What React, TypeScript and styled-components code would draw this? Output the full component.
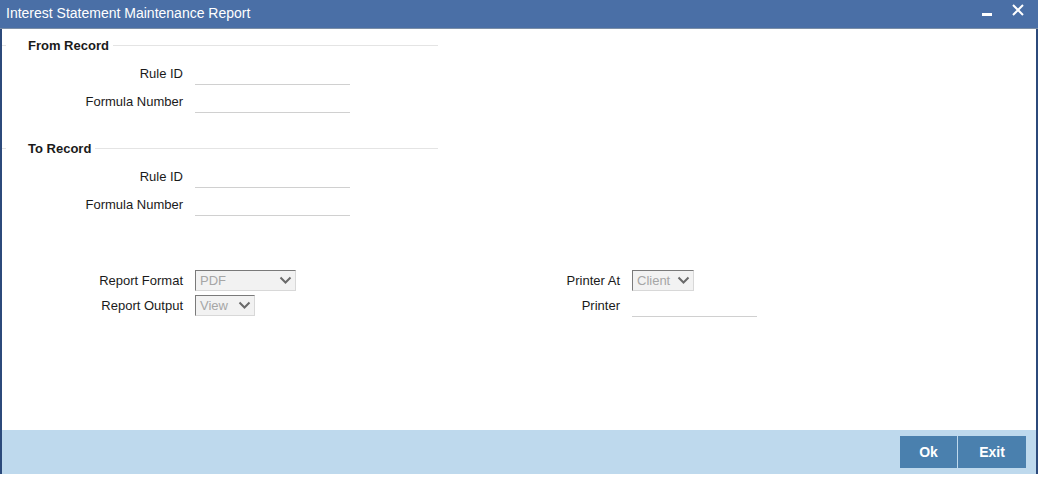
import React from "react";
import styled, { createGlobalStyle } from "styled-components";

const Global = createGlobalStyle`
  html, body { margin: 0; padding: 0; background: #ffffff; }
  body { font-family: Arial, "Liberation Sans", sans-serif; }
  * { box-sizing: border-box; }
`;

const Page = styled.div`
  width: 1038px;
  height: 483px;
  background: #ffffff;
  overflow: hidden;
`;

const Window = styled.div`
  width: 1038px;
  height: 474px;
  display: flex;
  flex-direction: column;
`;

const TitleBar = styled.div`
  height: 29px;
  flex: none;
  background: #4a6fa6;
  border-bottom: 1px solid #7b8ea6;
  display: flex;
  align-items: center;
  padding: 0 0 2px 6px;
  color: #ffffff;
  font-family: Arial, "Liberation Sans", sans-serif;
  font-size: 14px;
`;

const Title = styled.div`
  flex: 1;
`;

const WinButtons = styled.div`
  display: flex;
  align-items: center;
  gap: 20px;
  padding-right: 14px;
  margin-top: -6px;
`;

const Body = styled.div`
  flex: 1;
  display: flex;
  flex-direction: column;
  border-left: 2px solid #2c4a7b;
  border-right: 2px solid #2c4a7b;
`;

const Content = styled.div`
  flex: 1;
  display: flex;
  flex-direction: column;
  padding-top: 6px;
`;

const SectionHeader = styled.div<{ $top: number }>`
  width: 436px;
  height: 20px;
  margin-top: ${(p) => p.$top}px;
  margin-bottom: 4px;
  display: flex;
  align-items: center;
  &::before {
    content: "";
    width: 4px;
    height: 1px;
    background: #e4e4e4;
  }
  &::after {
    content: "";
    flex: 1;
    height: 1px;
    background: #e4e4e4;
  }
`;

const Legend = styled.span`
  font-weight: bold;
  font-size: 13px;
  color: #1a1a1a;
  padding: 0 4px 0 22px;
`;

const FormRow = styled.div<{ $h: number }>`
  height: ${(p) => p.$h}px;
  display: flex;
  align-items: center;
  gap: 12px;
`;

const Label = styled.div<{ $w: number }>`
  width: ${(p) => p.$w}px;
  text-align: right;
  font-size: 13px;
  color: #1a1a1a;
  flex: none;
`;

const TextInput = styled.div<{ $w: number; $top: number }>`
  width: ${(p) => p.$w}px;
  height: 23px;
  align-self: flex-start;
  margin-top: ${(p) => p.$top}px;
  border-bottom: 1px solid #d0d0d0;
`;

const Select = styled.div<{ $w: number }>`
  width: ${(p) => p.$w}px;
  height: 21px;
  display: flex;
  align-items: center;
  justify-content: space-between;
  padding: 0 3px 0 4px;
  background: #f2f2f2;
  border-top: 1px solid #7a7a7a;
  border-left: 1px solid #7a7a7a;
  border-right: 1px solid #d8d8d8;
  border-bottom: 1px solid #d8d8d8;
  color: #a6a6a6;
  font-size: 13px;
`;

const ReportArea = styled.div`
  margin-top: 50px;
  display: flex;
`;

const Column = styled.div<{ $w?: number }>`
  width: ${(p) => (p.$w ? `${p.$w}px` : "auto")};
  display: flex;
  flex-direction: column;
`;

const Footer = styled.div`
  height: 44px;
  flex: none;
  background: #bed9ed;
  display: flex;
  align-items: center;
  justify-content: flex-end;
  padding-right: 10px;
  padding-bottom: 1px;
`;

const ButtonGroup = styled.div`
  display: flex;
  gap: 1px;
  background: #bed9ed;
`;

const Button = styled.button<{ $w: number }>`
  width: ${(p) => p.$w}px;
  height: 32px;
  border: none;
  background: #4a80ae;
  color: #ffffff;
  font-family: Arial, "Liberation Sans", sans-serif;
  font-weight: bold;
  font-size: 14px;
  padding: 0;
`;

const Chevron = () => (
  <svg width="13" height="9" viewBox="0 0 13 9">
    <path d="M1.5 1.5 L6.5 6.5 L11.5 1.5" fill="none" stroke="#6a6a6a" strokeWidth="2" />
  </svg>
);

const DropDown = ({ w, value }: { w: number; value: string }) => (
  <Select $w={w}>
    <span>{value}</span>
    <Chevron />
  </Select>
);

const Field = ({ label }: { label: string }) => (
  <FormRow $h={28}>
    <Label $w={181}>{label}</Label>
    <TextInput $w={155} $top={3} />
  </FormRow>
);

export default function App() {
  return (
    <Page>
      <Global />
      <Window>
        <TitleBar>
          <Title>Interest Statement Maintenance Report</Title>
          <WinButtons>
            <svg width="10" height="10" viewBox="0 0 10 10" style={{ marginTop: 10 }}>
              <rect x="0" y="3" width="10" height="3" fill="#ffffff" />
            </svg>
            <svg width="12" height="12" viewBox="0 0 12 12">
              <path d="M1 1 L11 11 M11 1 L1 11" stroke="#ffffff" strokeWidth="2" />
            </svg>
          </WinButtons>
        </TitleBar>
        <Body>
          <Content>
            <SectionHeader $top={0}>
              <Legend>From Record</Legend>
            </SectionHeader>
            <Field label="Rule ID" />
            <Field label="Formula Number" />
            <SectionHeader $top={23}>
              <Legend>To Record</Legend>
            </SectionHeader>
            <Field label="Rule ID" />
            <Field label="Formula Number" />
            <ReportArea>
              <Column $w={448}>
                <FormRow $h={25}>
                  <Label $w={181}>Report Format</Label>
                  <DropDown w={101} value="PDF" />
                </FormRow>
                <FormRow $h={25}>
                  <Label $w={181}>Report Output</Label>
                  <DropDown w={60} value="View" />
                </FormRow>
              </Column>
              <Column>
                <FormRow $h={25}>
                  <Label $w={170}>Printer At</Label>
                  <DropDown w={62} value="Client" />
                </FormRow>
                <FormRow $h={25}>
                  <Label $w={170}>Printer</Label>
                  <TextInput $w={125} $top={1} />
                </FormRow>
              </Column>
            </ReportArea>
          </Content>
          <Footer>
            <ButtonGroup>
              <Button $w={57}>Ok</Button>
              <Button $w={68}>Exit</Button>
            </ButtonGroup>
          </Footer>
        </Body>
      </Window>
    </Page>
  );
}
